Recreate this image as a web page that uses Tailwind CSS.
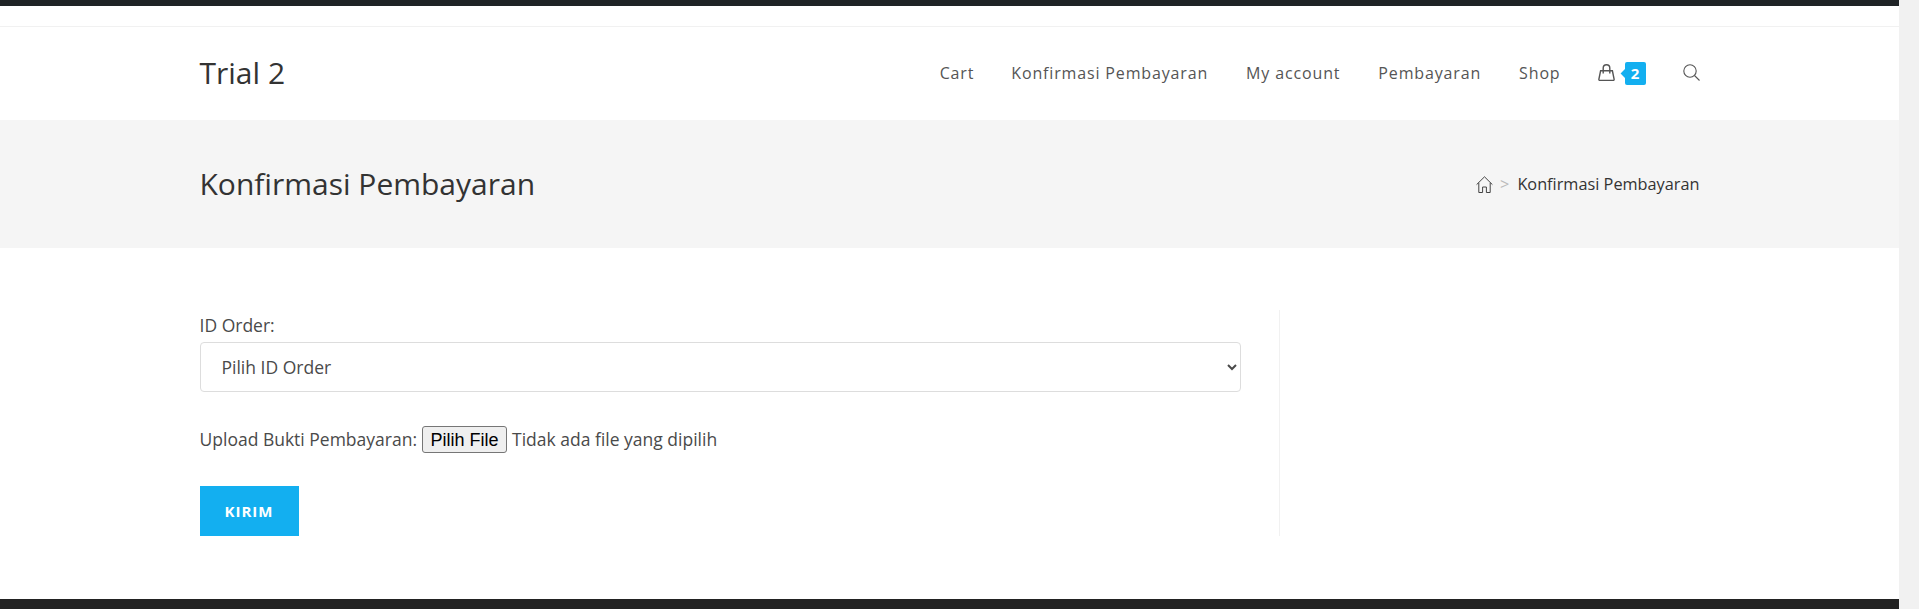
<!DOCTYPE html>
<html lang="id">
<head>
    <meta charset="UTF-8">
    <meta name="viewport" content="width=device-width, initial-scale=1.0">
    <title>Konfirmasi Pembayaran - Trial 2</title>
    <script src="https://cdn.jsdelivr.net/npm/@tailwindcss/browser@4"></script>
</head>
<body class="h-[609px] overflow-hidden bg-white font-['Open_Sans',sans-serif] text-[#4a4a4a]">
<div class="flex h-[609px]">
    <div class="flex w-[1899px] flex-col">
        <div class="h-[6px] bg-[#1f2326]"></div>
        <div class="h-[21px] border-b border-[#f1f1f1]"></div>

        <!-- header -->
        <header class="h-[93px]">
            <div class="mx-auto flex h-full w-[1500px] items-center justify-between">
                <a href="#" class="mt-[-2px] text-[30px] leading-none text-[#333]">Trial 2</a>
                <nav class="mt-[-2px] flex items-center text-[16px] tracking-[.85px] text-[#555]">
                    <a href="#">Cart</a>
                    <a href="#" class="ml-[37px]">Konfirmasi Pembayaran</a>
                    <a href="#" class="ml-[38px]">My account</a>
                    <a href="#" class="ml-[38px]">Pembayaran</a>
                    <a href="#" class="ml-[38px]">Shop</a>
                    <a href="#" class="ml-[37px] flex items-center">
                        <svg class="h-[17px] w-[17px]" viewBox="0 0 17 17" fill="none" stroke="#555" stroke-width="1.4">
                            <path d="M2.6 6.8h11.8l1.7 8.4q.2 1.2-1 1.2H1.9q-1.2 0-1-1.2z"/>
                            <path d="M5.2 9.5V4a3.3 3.3 0 0 1 6.6 0v5.5"/>
                        </svg>
                        <span class="relative ml-[10px] mt-[1px] flex h-[23px] w-[21px] items-center justify-center rounded-[2px] bg-[#13aff0] text-[15px] font-bold tracking-normal text-white">
                            2
                            <span class="absolute left-[-3px] top-[8px] h-[7px] w-[7px] rotate-45 bg-[#13aff0]"></span>
                        </span>
                    </a>
                    <a href="#" class="ml-[37px]">
                        <svg class="h-[17px] w-[17px]" viewBox="0 0 17 17" fill="none" stroke="#555" stroke-width="1.1">
                            <circle cx="7" cy="7" r="6.2"/>
                            <path d="M11.5 11.5 16.5 16.5"/>
                        </svg>
                    </a>
                </nav>
            </div>
        </header>

        <!-- page title -->
        <section class="h-[128px] bg-[#f5f5f5]">
            <div class="mx-auto flex h-full w-[1500px] items-center justify-between">
                <h1 class="text-[30px] leading-none text-[#333]">Konfirmasi Pembayaran</h1>
                <div class="flex items-center text-[16.3px] text-[#333]">
                    <svg class="h-[17px] w-[17px]" viewBox="0 0 17 17" fill="none" stroke="#444" stroke-width="1">
                        <path d="M.6 8.6 8.5.8l7.9 7.8"/>
                        <path d="M2.8 6.8v9.7h3.8v-5.5h3.8v5.5h3.8V6.8"/>
                    </svg>
                    <span class="ml-[7px] mr-[8px] text-[#bbb]">&gt;</span>
                    <span>Konfirmasi Pembayaran</span>
                </div>
            </div>
        </section>

        <!-- content -->
        <main class="flex-1 pt-[62px]">
            <div class="mx-auto flex w-[1500px]">
                <div class="w-[1080px] border-r border-[#f1f1f1] pr-[38px]">
                    <label class="block text-[17.5px] leading-[31px]">ID Order:</label>
                    <select class="mt-[1px] block h-[50px] w-full rounded-[4px] border border-[#ddd] bg-white pl-[17px] text-[17.5px] text-[#4a4a4a]">
                        <option>Pilih ID Order</option>
                    </select>
                    <div class="mt-[34px] flex h-[27px] items-center text-[17.5px]">
                        <span>Upload Bukti Pembayaran:</span>
                        <button class="ml-[5px] h-[27px] w-[85px] rounded-[3px] border border-[#767676] bg-[#efefef] font-['Liberation_Sans',sans-serif] text-[18px] leading-none text-black">Pilih File</button>
                        <span class="ml-[5px]">Tidak ada file yang dipilih</span>
                    </div>
                    <button class="mt-[33px] block h-[50px] w-[99px] bg-[#13aff0] text-[15px] font-bold tracking-[1px] text-white">KIRIM</button>
                </div>
            </div>
        </main>

        <div class="h-[10px] bg-[#222]"></div>
    </div>
    <div class="w-[20px] bg-[#f1f1f1]"></div>
</div>
</body>
</html>
